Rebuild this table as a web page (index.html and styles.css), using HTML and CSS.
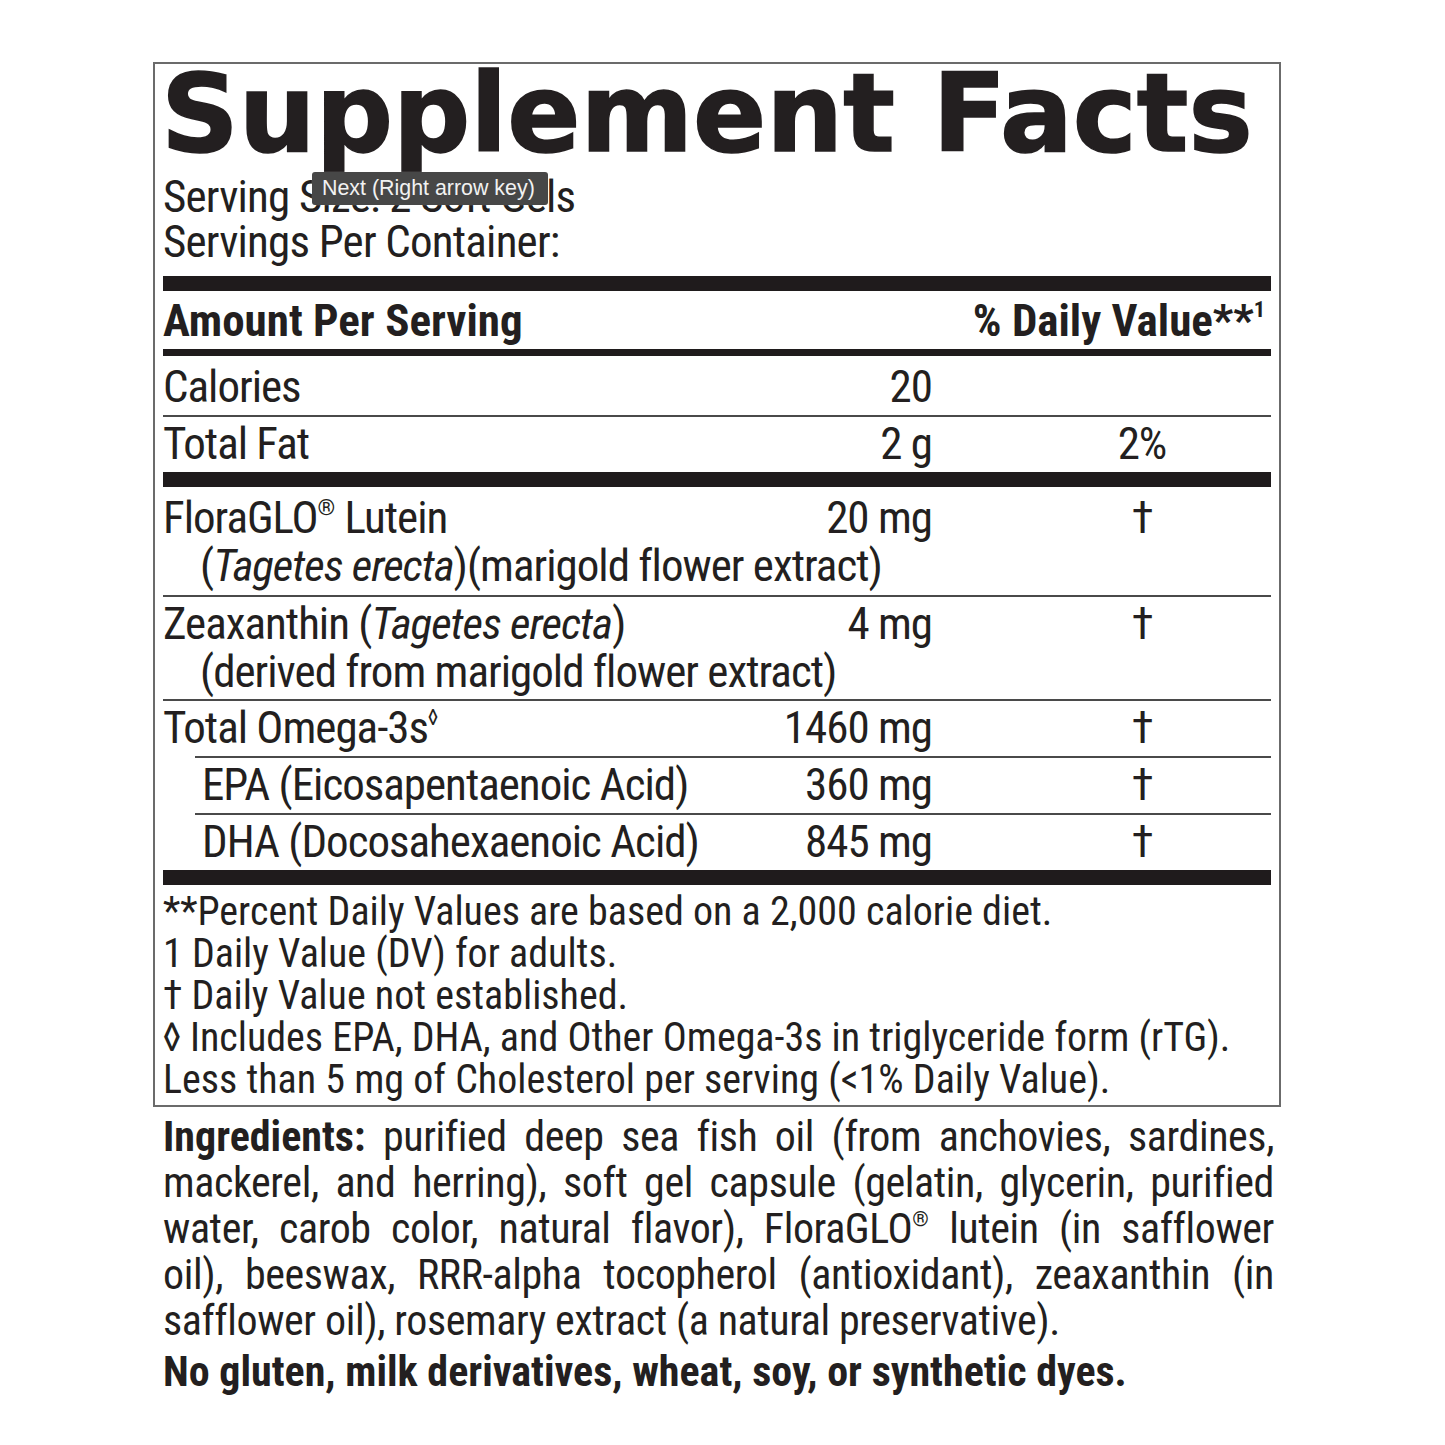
FILE: index.html
```html
<!DOCTYPE html>
<html lang="en">
<head>
<meta charset="utf-8">
<title>Supplement Facts</title>
<link rel="stylesheet" href="styles.css">
</head>
<body>
<div class="page">
  <div class="label">
    <h1 class="title">Supplement Facts</h1>
    <div class="serving">
      <div>Serving Size: 2 Soft Gels</div>
      <div>Servings Per Container:</div>
    </div>
    <div class="tooltip">Next (Right arrow key)</div>

    <div class="bar-thick"></div>
    <div class="head">
      <span>Amount Per Serving</span>
      <span class="head-dv">% Daily Value**<sup class="sup-one">1</sup></span>
    </div>
    <div class="bar-mid"></div>

    <div class="row first">
      <div class="main"><span>Calories</span><span>20</span></div>
      <div class="dv"></div>
    </div>
    <div class="row">
      <div class="main"><span>Total Fat</span><span>2 g</span></div>
      <div class="dv">2%</div>
    </div>

    <div class="bar-thick"></div>

    <div class="row first multi">
      <div class="main"><span>FloraGLO<sup class="mark">®</sup> Lutein</span><span>20 mg</span></div>
      <div class="dv">†</div>
      <div class="sub">(<i>Tagetes erecta</i>)(marigold flower extract)</div>
    </div>
    <div class="row multi">
      <div class="main"><span>Zeaxanthin (<i>Tagetes erecta</i>)</span><span>4 mg</span></div>
      <div class="dv">†</div>
      <div class="sub">(derived from marigold flower extract)</div>
    </div>
    <div class="row">
      <div class="main"><span>Total Omega-3s<sup class="mark">◊</sup></span><span>1460 mg</span></div>
      <div class="dv">†</div>
    </div>
    <div class="row indent">
      <div class="main"><span>EPA (Eicosapentaenoic Acid)</span><span>360 mg</span></div>
      <div class="dv">†</div>
    </div>
    <div class="row indent">
      <div class="main"><span>DHA (Docosahexaenoic Acid)</span><span>845 mg</span></div>
      <div class="dv">†</div>
    </div>

    <div class="bar-thick"></div>

    <div class="notes">
      <div>**Percent Daily Values are based on a 2,000 calorie diet.</div>
      <div>1 Daily Value (DV) for adults.</div>
      <div>† Daily Value not established.</div>
      <div>◊ Includes EPA, DHA, and Other Omega-3s in triglyceride form (rTG).</div>
      <div>Less than 5 mg of Cholesterol per serving (&lt;1% Daily Value).</div>
    </div>
  </div>

  <div class="ingredients">
    <p class="ing-line"><b>Ingredients:</b> purified deep sea fish oil (from anchovies, sardines,</p>
    <p class="ing-line">mackerel, and herring), soft gel capsule (gelatin, glycerin, purified</p>
    <p class="ing-line">water, carob color, natural flavor), FloraGLO<sup class="mark">®</sup> lutein (in safflower</p>
    <p class="ing-line">oil), beeswax, RRR-alpha tocopherol (antioxidant), zeaxanthin (in</p>
    <p class="ing-line last">safflower oil), rosemary extract (a natural preservative).</p>
    <p class="free">No gluten, milk derivatives, wheat, soy, or synthetic dyes.</p>
  </div>
</div>
</body>
</html>
```
FILE: styles.css
```css
html, body {
  margin: 0;
  padding: 0;
  background: #ffffff;
}

body {
  color: #231f20;
  font-family: "Roboto Condensed", "Liberation Sans Narrow", "Liberation Sans", sans-serif;
}

.page {
  padding: 62px 0 0 153px;
}

.label {
  position: relative;
  width: 1108px;
  border: 2px solid #6b6b6b;
  padding: 0 8px;
}

.title {
  margin: 0 0 0 -2px;
  font-family: "DejaVu Sans", "Liberation Sans", sans-serif;
  font-weight: bold;
  font-size: 108px;
  line-height: 100px;
  letter-spacing: 0;
  white-space: nowrap;
  color: #231f20;
  -webkit-text-stroke: 1.6px #231f20;
}

.serving {
  margin-top: 10px;
  font-size: 45px;
  line-height: 45px;
  letter-spacing: -0.8px;
}

.tooltip {
  position: absolute;
  left: 157px;
  top: 108px;
  width: 216px;
  height: 33px;
  padding: 0 10px;
  box-sizing: content-box;
  background: #474747;
  border-radius: 3px;
  box-shadow: 0 0 0 1px rgba(255,255,255,0.08);
  color: #f2f2f2;
  font-family: "Liberation Sans", Arial, sans-serif;
  font-size: 21.4px;
  line-height: 33px;
  white-space: nowrap;
}

.bar-thick {
  height: 15px;
  background: #1f1b1c;
}

.serving + .tooltip + .bar-thick {
  margin-top: 12px;
}

.bar-mid {
  height: 7px;
  background: #1f1b1c;
}

.head {
  display: flex;
  justify-content: space-between;
  padding: 6px 6px 4px 0;
  font-size: 45px;
  line-height: 48px;
  font-weight: bold;
}

.sup-one {
  font-size: 0.5em;
  line-height: 0;
  vertical-align: 0.85em;
}

.row {
  display: grid;
  grid-template-columns: 1fr 258px;
  border-top: 2px solid #4a4a4a;
  padding: 3px 0 4px;
  font-size: 45px;
  line-height: 48px;
  letter-spacing: -1px;
}

.row.first {
  border-top: 0;
  padding-top: 7px;
}

.row.multi {
  padding-bottom: 3px;
}

.row.first.multi {
  padding-bottom: 5px;
}

.row.indent {
  margin-left: 32px;
  padding-left: 7px;
}

.main {
  display: flex;
  justify-content: space-between;
  padding-right: 81px;
  white-space: nowrap;
}

.dv {
  text-align: center;
}

.sub {
  grid-column: 1;
  padding-left: 37px;
  white-space: nowrap;
}

.mark {
  font-size: 0.5em;
  line-height: 0;
  vertical-align: 0.8em;
  letter-spacing: 0;
}

.notes {
  padding: 6px 0 4px;
  font-size: 40px;
  line-height: 42px;
  white-space: nowrap;
}

.ingredients {
  width: 1111px;
  margin: 7px 0 0 10px;
  font-size: 42px;
  line-height: 46px;
}

.ing-line {
  margin: 0;
  text-align: justify;
  text-align-last: justify;
  white-space: nowrap;
  letter-spacing: -0.4px;
}

.ing-line b {
  letter-spacing: 0;
}

.ing-line.last {
  text-align-last: left;
}

.free {
  margin: 5px 0 0;
  font-weight: bold;
  font-size: 42px;
  line-height: 46px;
  white-space: nowrap;
}
```
